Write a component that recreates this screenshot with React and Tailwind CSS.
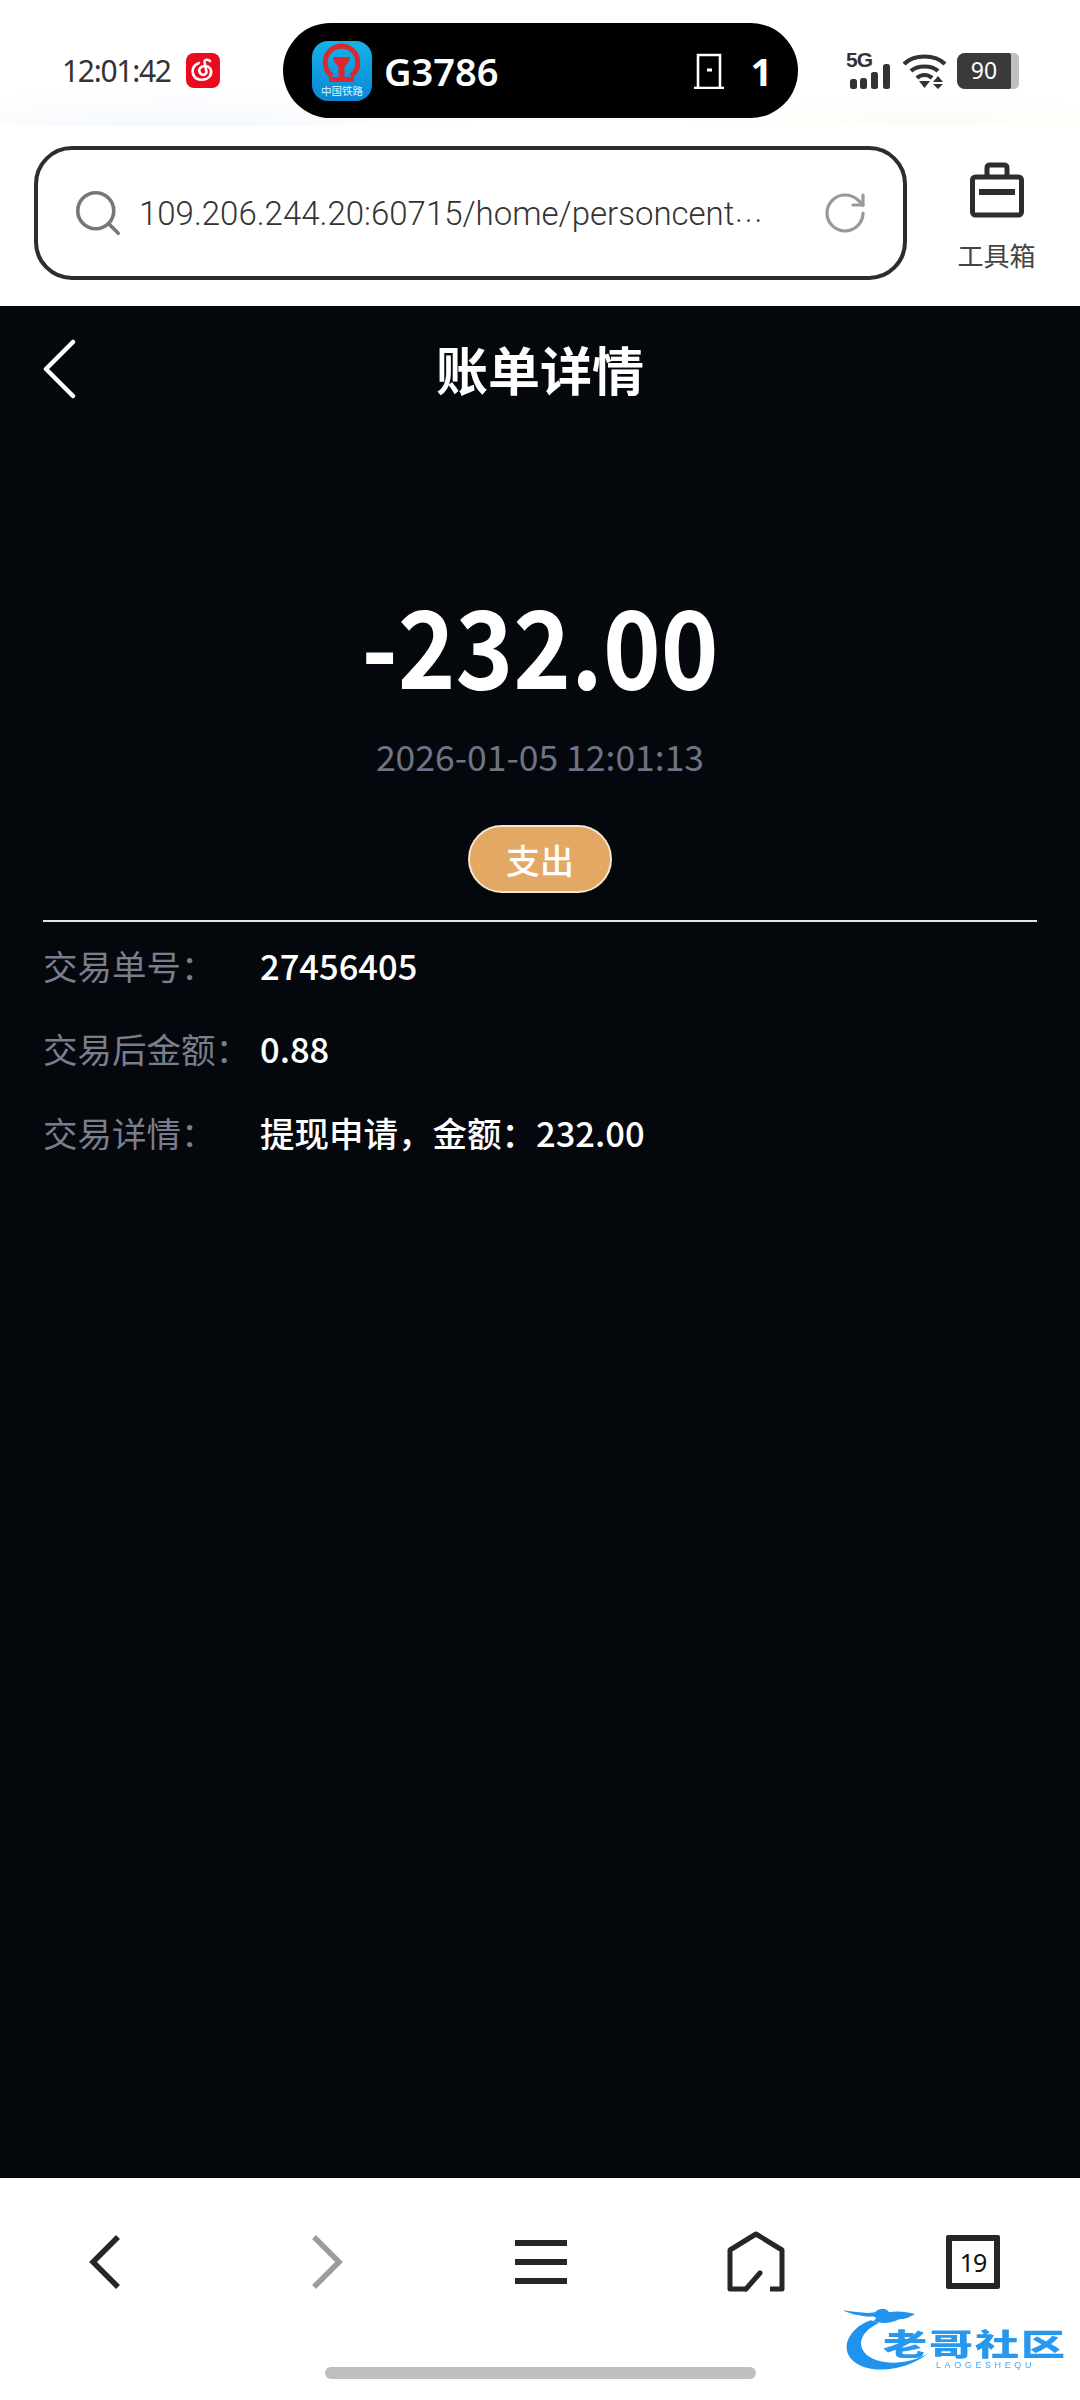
import { Search, RotateCw } from 'lucide-react';

const cjk = "font-['Noto_Sans_CJK_SC','Noto_Sans',sans-serif]";

function RailwayIcon() {
  return (
    <div className="w-[60px] h-[60px] rounded-[16px] bg-gradient-to-b from-[#12b4e8] to-[#0d86d6] flex flex-col items-center">
      <svg viewBox="0 0 60 44" className="w-[60px] h-[44px]">
        <path d="M20 35 C8 27 12 6 29.5 5 C47 6 51 27 39 35" fill="none" stroke="#e0262c" strokeWidth="5" />
        <path d="M21 16 H38 C38 22 33 24 32.5 26 V36 H42 V41 H17 V36 H26.5 V26 C26 24 21 22 21 16Z" fill="#e0262c" />
      </svg>
      <span className={`${cjk} text-[10.5px] leading-[12px] font-medium text-[#bfeafa] whitespace-nowrap`}>中国铁路</span>
    </div>
  );
}

function NeteaseIcon() {
  return (
    <div className="w-[34px] h-[35px] rounded-[8px] bg-[#ec0a1e] flex items-center justify-center">
      <svg viewBox="0 0 34 35" className="w-[34px] h-[35px]" fill="none" stroke="#fff" strokeWidth="2.6" strokeLinecap="round">
        <path d="M13 10 C7 12 5 18 8 23 C11 28 20 28 24 23 C27 18 24 13 19 13 C14 13 12 17 14 20 C16 23 20 22 20.5 19 L18.5 9 C18 6.5 22 6 24 8" />
      </svg>
    </div>
  );
}

function SignalIcons() {
  return (
    <div className="flex items-center">
      {/* 5G and bars */}
      <div className="relative w-[44px] h-[36px]">
        <span className="absolute left-[-2px] top-[-4px] font-['Liberation_Sans',sans-serif] font-bold text-[21px] leading-[22px] tracking-[-1px] text-[#333]">5G</span>
        <svg viewBox="0 0 44 36" className="w-[44px] h-[36px]" fill="#333">
          <rect x="2" y="26" width="7" height="10" rx="2.5" />
          <rect x="12" y="25" width="7" height="11" rx="2.5" />
          <rect x="23" y="19" width="7" height="17" rx="2.5" />
          <rect x="35" y="11" width="7" height="25" rx="2.5" />
        </svg>
      </div>
      <svg viewBox="0 0 46 36" className="w-[46px] h-[36px] ml-[10px]" fill="none" stroke="#333" strokeWidth="4.2">
        <path d="M2 11 C12 1 33 1 43 11" />
        <path d="M9 18 C15 12 30 12 36 18" />
        <path d="M15 25 C19 21 26 21 30 25" />
        <path d="M17 28 H28 L22.5 35Z" fill="#333" stroke="none" />
        <path d="M36 23 L41 29 H31Z M31 31 H41 L36 36Z" fill="#333" stroke="none" />
      </svg>
      <div className="ml-[9px] w-[62px] h-[36px] rounded-l-[8px] rounded-r-[5px] bg-[#c0c0c0] overflow-hidden flex">
        <div className="w-[54px] h-full bg-[#3a3a3a] rounded-r-[2px] flex items-center justify-center text-white font-['Noto_Sans',sans-serif] text-[23px] leading-none">90</div>
      </div>
    </div>
  );
}

function StatusBar() {
  return (
    <div className="h-[126px] pt-[23px] pl-[62px] flex items-start bg-[radial-gradient(ellipse_300px_40px_at_180px_126px,#f4f8fc,transparent),radial-gradient(ellipse_260px_30px_at_930px_126px,#fdfbf4,transparent)] bg-white">
      <div className="h-[95px] flex items-center">
        <span className="font-['Noto_Sans',sans-serif] text-[#333] text-[30px] leading-none w-[124px] tracking-[-1.3px]">12:01:42</span>
        <NeteaseIcon />
      </div>
      <div className="ml-[63px] w-[515px] h-[95px] rounded-full bg-black flex items-center pl-[29px]">
        <RailwayIcon />
        <span className="ml-[12px] font-['Noto_Sans',sans-serif] font-semibold text-white text-[38px] leading-none">G3786</span>
        <svg viewBox="0 0 30 36" className="ml-[195px] w-[30px] h-[36px]" fill="none" stroke="#fff" strokeWidth="2.6">
          <path d="M4 35 V2 H26 V35" />
          <path d="M0 35 H30" />
          <path d="M13 17 H18" strokeWidth="3" />
        </svg>
        <span className="ml-[27px] font-['Noto_Sans',sans-serif] font-bold text-white text-[38px] leading-none">1</span>
      </div>
      <div className="ml-[50px] h-[95px] flex items-center">
        <SignalIcons />
      </div>
    </div>
  );
}

function UrlBar() {
  return (
    <div className="h-[180px] pl-[34px] pt-[20px] bg-white flex items-start">
      <div className="w-[873px] h-[134px] rounded-[38px] border-[4px] border-[#2d2d2d] flex items-center pl-[33px]">
        <Search className="w-[54px] h-[54px] text-[#777] shrink-0" strokeWidth={1.6} />
        <span className="ml-[14px] w-[626px] font-['Roboto',sans-serif] font-light text-[#333] text-[33px] leading-none whitespace-nowrap">
          109.206.244.20:60715/home/personcent
          <span className="font-['Noto_Sans_CJK_SC',sans-serif] text-[26px] align-[3px]">⋯</span>
        </span>
        <RotateCw className="ml-[56px] w-[48px] h-[48px] text-[#999] shrink-0" strokeWidth={1.6} />
      </div>
      <div className="ml-[50px] w-[79px] flex flex-col items-center">
        <svg viewBox="0 0 54 56" className="w-[54px] h-[56px] mt-[16px]" fill="none" stroke="#2d2d2d" strokeWidth="5">
          <rect x="2.5" y="15" width="49" height="38" rx="3" />
          <path d="M17 15 V6 C17 4 18 3 20 3 H34 C36 3 37 4 37 6 V15" />
          <path d="M9 30 H45" strokeWidth="6" />
        </svg>
        <span className={`${cjk} mt-[22px] text-[26px] leading-[30px] text-[#444] whitespace-nowrap`}>工具箱</span>
      </div>
    </div>
  );
}

const rows = [
  ['交易单号：', '27456405'],
  ['交易后金额：', '0.88'],
  ['交易详情：', '提现申请，金额：232.00'],
];

function BillDetail() {
  return (
    <div className={`flex-1 bg-[#04080d] px-[43px] ${cjk}`}>
      <div className="h-[126px] grid grid-cols-[1fr_auto_1fr] items-center">
        <svg viewBox="0 0 33 60" className="w-[33px] h-[60px]" fill="none" stroke="#fff" strokeWidth="4.5" strokeLinecap="round" strokeLinejoin="round">
          <path d="M30 3 L3 30 L30 57" />
        </svg>
        <h1 className="text-[52px] leading-none font-bold text-white">账单详情</h1>
      </div>
      <div className="mt-[146px] text-center text-[98px] leading-[128px] font-bold text-white scale-y-[1.1]">-232.00</div>
      <div className="mt-[28px] text-center text-[35.5px] leading-[44px] text-[#6f7385]">2026-01-05 12:01:13</div>
      <div className="mt-[47px] flex justify-center">
        <div className="w-[144px] h-[68px] rounded-[34px] border-2 border-[#f4e6d2] bg-[#e3a863] text-white text-[34px] font-medium flex items-center justify-center">支出</div>
      </div>
      <div className="mt-[27px] h-[2px] bg-[#dfe5f0]" />
      <div className="mt-[1px]">
        {rows.map(([label, value]) => (
          <div key={label} className="h-[83.5px] flex items-center text-[34.5px] leading-none">
            <span className="w-[217px] text-[#7a7e8c] whitespace-nowrap">{label}</span>
            <span className="text-white font-medium whitespace-nowrap">{value}</span>
          </div>
        ))}
      </div>
    </div>
  );
}

function BottomNav() {
  return (
    <div className="h-[222px] bg-white">
      <div className="h-[189px] pt-[53px] flex items-start pl-[89px]">
        <svg viewBox="0 0 31 54" className="w-[31px] h-[54px] mt-[4px]" fill="none" stroke="#262626" strokeWidth="5.5">
          <path d="M29 2 L4 27 L29 52" />
        </svg>
        <svg viewBox="0 0 31 54" className="ml-[192px] w-[31px] h-[54px] mt-[4px]" fill="none" stroke="#9c9c9c" strokeWidth="5.5">
          <path d="M2 2 L27 27 L2 52" />
        </svg>
        <svg viewBox="0 0 52 44" className="ml-[172px] w-[52px] h-[44px] mt-[9px]" fill="#262626">
          <rect width="52" height="6" y="0" />
          <rect width="52" height="6" y="19" />
          <rect width="52" height="6" y="38" />
        </svg>
        <svg viewBox="0 0 58 61" className="ml-[160px] w-[58px] h-[61px]" fill="none" stroke="#262626" strokeWidth="5" strokeLinejoin="round">
          <path d="M19 58 H3 V19 L29 3 L55 19 V58 H43" />
          <path d="M19 58 L33 42" strokeLinecap="round" />
        </svg>
        <div className="ml-[161px] mt-[4px] w-[54px] h-[54px] border-[6px] border-[#262626] rounded-[2px] flex items-center justify-center font-['Noto_Sans',sans-serif] text-[#111] text-[25px] leading-none tracking-[-1px]">19</div>
      </div>
      <div className="flex justify-center">
        <div className="w-[431px] h-[12px] rounded-full bg-[#bfbfbf]" />
      </div>
    </div>
  );
}

function Watermark() {
  return (
    <div className="absolute left-[843px] top-[2305px] w-[224px] h-[70px] blur-[0.5px]">
      <svg viewBox="0 0 224 76" preserveAspectRatio="none" className="absolute left-0 top-0 w-[224px] h-[68px]" fill="#1f93ee">
        <path d="M28 17 C8 24 -3 46 8 60 C22 78 60 76 86 54 C64 68 34 68 22 54 C13 42 20 28 36 20Z" />
        <path d="M0 6 C14 8 24 10 32 8 C38 2 44 4 46 8 C56 6 64 8 72 10 C66 14 62 16 56 16 C46 22 36 20 30 18 C36 14 32 12 26 13 C16 12 6 10 0 6Z" />
      </svg>
      <span className={`absolute left-[40px] top-[15px] ${cjk} font-black text-[#2798ee] text-[44px] leading-[44px] tracking-[2px] whitespace-nowrap scale-y-[.68]`}>老哥社区</span>
      <span className="absolute left-[93px] top-[55px] font-['Liberation_Sans',sans-serif] text-[#4aa8ee] text-[9px] leading-[10px] tracking-[3.6px] whitespace-nowrap">LAOGESHEQU</span>
    </div>
  );
}

export default function App() {
  return (
    <div className="relative w-[1080px] h-[2400px] flex flex-col overflow-hidden bg-white">
      <StatusBar />
      <UrlBar />
      <BillDetail />
      <BottomNav />
      <Watermark />
    </div>
  );
}
